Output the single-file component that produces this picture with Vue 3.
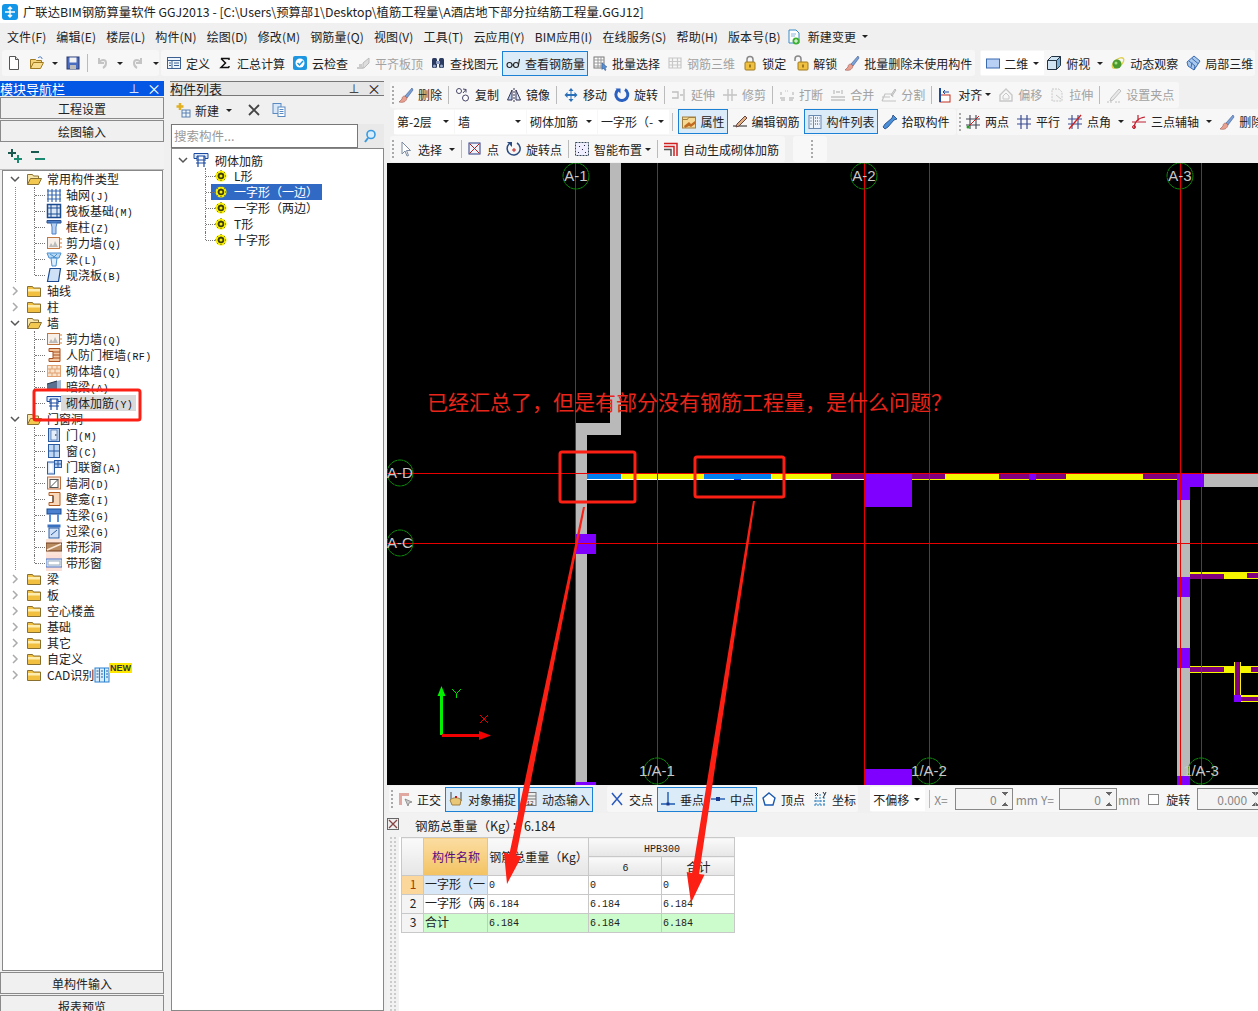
<template>
  <div class="app">
    <div class="titlebar">
      <svg class="logo" viewBox="0 0 16 16"><rect width="16" height="16" rx="3" fill="#1496e8" /><path d="M8 3v10M3 8h10M6 5l2-2 2 2M6 11l2 2 2-2" fill="none" stroke="#fff" stroke-width="1.4" /></svg>
      <span>广联达BIM钢筋算量软件 GGJ2013 - [C:\Users\预算部1\Desktop\植筋工程量\A酒店地下部分拉结筋工程量.GGJ12]</span>
    </div>

    <div class="menubar">
      <span v-for="m in menus" :key="m">{{ m }}</span>
      <span class="menu-new"><svg class="ti" viewBox="0 0 16 16" v-html="ic.newchange"></svg>新建变更<i class="caret"></i></span>
    </div>

    <div class="topbar">
      <div v-for="(g, n) in topGroups" :key="n" class="tgroup" :class="g.cls">
        <Tool v-for="(it, k) in g.items" :key="k" :it="it" />
      </div>
    </div>

    <div class="body">
      <aside class="nav">
        <div class="panel-head active"><span>模块导航栏</span><span class="pin">⊥</span><span class="close">×</span></div>
        <button class="navbtn">工程设置</button>
        <button class="navbtn">绘图输入</button>
        <div class="expand-tools">
          <svg viewBox="0 0 16 16" width="20" height="16" v-html="ic.plusplus"></svg>
          <svg viewBox="0 0 16 16" width="20" height="16" v-html="ic.minusminus"></svg>
        </div>
        <div class="tree nav-tree">
          <div v-for="(r, n) in navRows" :key="n" class="row" :class="{ child: r.child, last: r.last, guide: r.guide }">
            <template v-if="!r.child">
              <svg class="chev" viewBox="0 0 10 10"><path :d="r.open ? 'M1 3l4 4 4-4' : 'M3 1l4 4-4 4'" fill="none" :stroke="r.open ? '#555' : '#aaa'" stroke-width="1.5" /></svg>
              <svg class="ti folder" viewBox="0 0 16 16" v-html="r.open ? ic.folderOpen : ic.folder"></svg>
            </template>
            <svg v-else class="ti kid" viewBox="0 0 16 16" v-html="ic[r.i]"></svg>
            <span class="lbl" :class="{ picked: r.picked }">{{ r.t }}<em v-if="r.c">{{ r.c }}</em></span>
            <svg v-if="r.cad" class="ti cad" viewBox="0 0 16 16" v-html="ic.cad"></svg>
            <b v-if="r.cad" class="newtag">NEW</b>
          </div>
        </div>
        <button class="navbtn">单构件输入</button>
        <button class="navbtn">报表预览</button>
      </aside>

      <aside class="list">
        <div class="panel-head"><span>构件列表</span><span class="pin">⊥</span><span class="close">×</span></div>
        <div class="list-tools">
          <svg class="ti" viewBox="0 0 16 16" v-html="ic.newitem"></svg>
          <span>新建</span><i class="caret"></i>
          <svg class="ti xbtn" viewBox="0 0 16 16"><path d="M3 3l10 10M13 3L3 13" stroke="#444" stroke-width="1.8" /></svg>
          <svg class="ti" viewBox="0 0 16 16" v-html="ic.copydoc"></svg>
        </div>
        <div class="search">
          <div class="search-input">搜索构件...</div>
          <svg class="ti" viewBox="0 0 16 16"><circle cx="9" cy="6.500" r="4" fill="#d8eefc" stroke="#3a9ae0" stroke-width="1.600" /><path d="M6 10l-3 4" stroke="#3a9ae0" stroke-width="2" /></svg>
        </div>
        <div class="tree list-tree">
          <div class="row root">
            <svg class="chev" viewBox="0 0 10 10"><path d="M1 3l4 4 4-4" fill="none" stroke="#555" stroke-width="1.500" /></svg>
            <svg class="ti" viewBox="0 0 16 16" v-html="ic.masonry"></svg>
            <span>砌体加筋</span>
          </div>
          <div v-for="(t, n) in listRows" :key="t" class="row leaf" :class="{ last: n === listRows.length - 1 }">
            <svg class="gear" viewBox="0 0 12 12" v-html="ic.gear"></svg>
            <span class="leaf-text" :class="{ sel: n === 1 }">{{ t }}</span>
          </div>
        </div>
      </aside>

      <main class="work">
        <div v-for="(r, n) in workRows" :key="n" class="wrow">
          <div v-for="(g, m) in r" :key="m" class="tgroup" :class="g.cls">
            <Tool v-for="(it, k) in g.items" :key="k" :it="it" />
          </div>
        </div>

        <svg class="cad-view" viewBox="387 163 871 622" width="871" height="622">
          <rect v-for="(b, n) in blocks" :key="n" :x="b[0]" :y="b[1]" :width="b[2]" :height="b[3]" :fill="b[4]" />
          <path v-for="x in vLines" :key="x" :d="`M${x}.5 163V785`" stroke="#e80000" />
          <path v-for="y in hLines" :key="y" :d="`M387 ${y}.5H1258`" stroke="#e80000" />
          <g v-for="a in axes" :key="a.t">
            <circle :cx="a.x" :cy="a.y" r="13" fill="none" stroke="#0a8a0a" stroke-dasharray="6 0.5" />
            <text :x="a.x" :y="a.y + 5" class="axis">{{ a.t }}</text>
          </g>
          <path d="M441.500 735V695" stroke="#00f000" stroke-width="3" />
          <path d="M441.500 686l-4 10h8z" fill="#00f000" />
          <path d="M442 735.500H480" stroke="#f00000" stroke-width="3" />
          <path d="M491 735.500l-12-4.500v9z" fill="#f00000" />
          <path d="M452 689l4.500 4.500 4.500-4.500M456.500 693.500v4.500" fill="none" stroke="#00e000" />
          <path d="M480 715l8 8M488 715l-8 8" stroke="#e00000" />
        </svg>

        <div class="wrow status">
          <div v-for="(g, m) in statusGroups" :key="m" class="tgroup" :class="g.cls">
            <Tool v-for="(it, k) in g.items" :key="k" :it="it" />
          </div>
        </div>

        <div class="summary">
          <svg class="sum-x" viewBox="0 0 12 12"><rect x=".5" y=".5" width="11" height="11" fill="#eee" stroke="#666" /><path d="M2 2l8 8M10 2l-8 8" stroke="#844" stroke-width="1.300" /></svg>
          <span>钢筋总重量（Kg）：6.184</span>
        </div>

        <div class="sheet">
          <div class="sheet-grip"></div>
          <table class="grid">
            <colgroup><col class="c0" /><col class="c1" /><col class="c2" /><col class="c3" /><col class="c4" /></colgroup>
            <thead>
              <tr>
                <th rowspan="2"></th>
                <th rowspan="2" class="hname">构件名称</th>
                <th rowspan="2">钢筋总重量（Kg）</th>
                <th colspan="2"><em>HPB300</em></th>
              </tr>
              <tr><th><em>6</em></th><th>合计</th></tr>
            </thead>
            <tbody>
              <tr v-for="(r, n) in sheetRows" :key="n" :class="{ total: n === 2, cur: n === 0 }">
                <td class="num">{{ n + 1 }}</td>
                <td class="name">{{ r[0] }}</td>
                <td v-for="(v, k) in r.slice(1)" :key="k"><em>{{ v }}</em></td>
              </tr>
            </tbody>
          </table>
        </div>
      </main>
    </div>

    <!-- 截图上的红色批注 -->
    <svg class="notes" viewBox="0 0 1258 1011" width="1258" height="1011">
      <rect x="34" y="390" width="106" height="30" rx="2" class="mark" />
      <rect x="560" y="452" width="75" height="50" rx="2" class="mark" />
      <rect x="695" y="457" width="89" height="40" rx="2" class="mark" />
      <polygon points="585,507 516.200,855.300 521.600,856.400 507,884 504,852.800 509.400,853.900 583,507" fill="#fb1f14" />
      <polygon points="755,501 699.100,873.900 704.500,874.800 691,903 686.700,872 692.100,872.900 753,501" fill="#fb1f14" />
    </svg>
    <div class="note-text">已经汇总了，但是有部分没有钢筋工程量，是什么问题？</div>
  </div>
</template>

<script setup>
import { h } from 'vue'

const ic = {
  newchange: '<path d="M3 1h7l3 3v10H3z" fill="#fff" stroke="#3a8ac8"/><path d="M5 5h5M5 7h4" stroke="#8ab8e0"/><circle cx="10" cy="12" r="3.500" fill="#3cb030"/><path d="M10 10v4M8 12h4" stroke="#fff"/>',
  doc: '<path d="M3.500 1.500h6l3 3v10h-9z" fill="#fff" stroke="#555"/><path d="M9.500 1.500v3h3" fill="#ddd" stroke="#555"/>',
  open: '<path d="M1.500 13.500v-9h5l1 1h5v2" fill="#f4d27a" stroke="#a07a20"/><path d="M1.500 13.500l3-6h10l-3 6z" fill="#f8dc90" stroke="#a07a20"/><path d="M9 3c2-2 4-1 4 1" fill="none" stroke="#3a70c0"/>',
  save: '<rect x="2" y="2" width="12" height="12" fill="#4a6cc0" stroke="#2a3a70"/><rect x="4.500" y="2.500" width="7" height="5" fill="#f4f4f4"/><rect x="5" y="10" width="6" height="4" fill="#bbb"/>',
  undo: '<path d="M5 3v5h5M5 8c2-4 7-4 7 0 0 2-1 4-3 5" fill="none" stroke="#c4c4c4" stroke-width="2"/>',
  redo: '<path d="M11 3v5H6M11 8C9 4 4 4 4 8c0 2 1 4 3 5" fill="none" stroke="#c4c4c4" stroke-width="2"/>',
  define: '<rect x="1.500" y="2.500" width="13" height="11" fill="#eef4fb" stroke="#3a5f90"/><path d="M1.500 5.500h13M6 5.500v8M8 8h5M8 10.500h5M3 8h2M3 10.500h2" stroke="#3a5f90"/>',
  sigma: '<path d="M4 3.500h8v1.500M12 12.500H4l4.500-4.500L4 3.500M12 11v1.500" fill="none" stroke="#111" stroke-width="1.500"/>',
  cloud: '<rect x="1" y="1" width="14" height="14" rx="2" fill="#1e96e0"/><circle cx="8" cy="8" r="4.500" fill="#fff"/><path d="M5.500 8l2 2 3.500-4" fill="none" stroke="#1e96e0" stroke-width="1.500"/>',
  flat: '<path d="M2 13h6V8l6-5v5l-5 5H2z" fill="#ddd" stroke="#bbb"/><path d="M4 9h3v4H4z" fill="#ccc"/>',
  find: '<rect x="2" y="3" width="5" height="10" rx="1.500" fill="#2a3a60"/><rect x="9" y="3" width="5" height="10" rx="1.500" fill="#2a3a60"/><rect x="6" y="6" width="4" height="3" fill="#8a9ac0"/><circle cx="4.500" cy="11" r="1.500" fill="#9ac"/><circle cx="11.500" cy="11" r="1.500" fill="#9ac"/>',
  glasses: '<circle cx="4.500" cy="10" r="2.500" fill="none" stroke="#222" stroke-width="1.100"/><circle cx="11" cy="10" r="2.500" fill="none" stroke="#222" stroke-width="1.100"/><path d="M7 10h1.500M13.500 10l1-6" stroke="#222" stroke-width="1.100"/>',
  batch: '<rect x="2" y="2" width="10" height="11" fill="#fff" stroke="#777"/><path d="M2 5h10M2 8h10M2 11h10M6 2v11M9 2v11" stroke="#999"/><path d="M10 8l5 4-2 .5 1 2.500-1 .5-1.500-2.500-1.500 1.500z" fill="#5a90d0" stroke="#2a5090" stroke-width=".500"/>',
  rebar: '<path d="M2 3h12v10H2zM2 6.500h12M2 10h12M5.500 3v10M10.500 3v10" fill="none" stroke="#c8c8c8" stroke-width="1.200"/>',
  lock: '<path d="M5 7V4.500a3 3 0 0 1 6 0V7" fill="none" stroke="#888" stroke-width="1.500"/><rect x="3" y="7" width="10" height="8" rx="1" fill="#f0c040" stroke="#a07a20"/><rect x="7.300" y="9.500" width="1.400" height="3" fill="#7a5a10"/>',
  unlock: '<path d="M2 6V4a3 3 0 0 1 6 0v3" fill="none" stroke="#888" stroke-width="1.500"/><rect x="5" y="7" width="10" height="8" rx="1" fill="#f0c040" stroke="#a07a20"/><rect x="9.300" y="9.500" width="1.400" height="3" fill="#7a5a10"/>',
  brush: '<path d="M14 1l-7 8 2 2 6-8z" fill="#7aa0d8" stroke="#3a5a90" stroke-width=".600"/><path d="M7 9c-2 0-3 1-3 3l-3 3c4 1 7 0 8-4z" fill="#e8a090" stroke="#a05a50" stroke-width=".600"/>',
  plane: '<rect x="1.500" y="4" width="13" height="9" fill="#b8d0f4" stroke="#3a6ab0"/>',
  cube: '<path d="M1.500 5.500l4-4h9l-4 4v9h-9z" fill="#d0e4f4" stroke="#234"/><path d="M10.500 5.500v9l4-4v-9zM1.500 5.500h9" fill="#7ab0d8" stroke="#234"/>',
  orbit: '<ellipse cx="8" cy="8" rx="7" ry="3.500" transform="rotate(-40 8 8)" fill="none" stroke="#e0d050" stroke-width="1.400"/><circle cx="7" cy="9" r="4.500" fill="#4a9a30"/><circle cx="6" cy="8" r="1.500" fill="#a8e080"/>',
  local3d: '<path d="M2 7l7-6 6 5-6 9-6-4z" fill="#a8c8ec" stroke="#3a6ab0"/><path d="M4 6l6 5M7 3.500l6 5M9 15l1-4M6 12.500l1-5" stroke="#3a6ab0"/>',
  dup: '<circle cx="4" cy="4" r="2.500" fill="#fff" stroke="#446"/><circle cx="10.500" cy="11" r="3" fill="#fff" stroke="#446"/><path d="M8 2l3 .5v3M11 2.500L8 6" fill="none" stroke="#446"/>',
  mirror: '<path d="M8 1v14" stroke="#335" stroke-dasharray="2 1"/><path d="M6 3v10H1.500z" fill="#b8d0f0" stroke="#335"/><path d="M10 3v10h4.500z" fill="#dde8f8" stroke="#335"/>',
  move: '<path d="M8 1l2.500 3h-2v3h3V5l3 3-3 3V9h-3v3h2L8 15l-2.500-3h2V9h-3v2l-3-3 3-3v2h3V4h-2z" fill="#2a70b8"/>',
  rotate: '<path d="M4 3a6 6 0 1 0 7-.5" fill="none" stroke="#2a60c0" stroke-width="3"/><path d="M1.500 1.500h5v5z" fill="#2a60c0"/>',
  extend: '<path d="M1 5h6v6H1M9 8h3M13 2v12" fill="none" stroke="#c0c0c0" stroke-width="1.400"/>',
  trim: '<path d="M1 8h14M6 2v12M10 2v12" stroke="#c4c4c4" stroke-width="1.400"/>',
  breaks: '<path d="M2 8V5M14 8V5M1 11h5M10 11h5M2 13h4M10 13h4" stroke="#c4c4c4" stroke-width="1.400"/><path d="M6 4h4" stroke="#c4c4c4" stroke-dasharray="1 1"/>',
  merge: '<path d="M4 3v4M12 3v4M1 10h14M1 13h14M6 5h4" stroke="#c4c4c4" stroke-width="1.400"/>',
  split: '<path d="M1 14h14M1 10h8M1 14l3-7h7l1 3" fill="none" stroke="#c4c4c4" stroke-width="1.200"/><path d="M10 8l4-6 1 1-4 6z" fill="#ddd" stroke="#bbb"/>',
  align: '<rect x="2" y="8" width="10" height="7" fill="#fff" stroke="#c03020"/><path d="M2 1v14" stroke="#1a4aa0" stroke-width="2"/><path d="M11 5H5M7 3L5 5l2 2" fill="none" stroke="#1a4aa0"/>',
  offset: '<path d="M8 2l6 6v6H2V8z" fill="none" stroke="#c8c8c8" stroke-width="1.400"/><path d="M8 6l3 3v3H5V9z" fill="none" stroke="#c8c8c8"/>',
  stretch: '<path d="M3 2h7l3 3v9H3z" fill="#f4f4f4" stroke="#c8c8c8" stroke-dasharray="2 1"/><path d="M7 8l5 4" stroke="#c8c8c8"/>',
  grippt: '<path d="M13 2l-8 9-1 3 3-1 8-9z" fill="#e8e8e8" stroke="#c0c0c0"/><path d="M1 15h5M9 15h5" stroke="#c0c0c0" stroke-dasharray="2 1"/>',
  attr: '<rect x="1.500" y="3" width="13" height="11" fill="#f4d894" stroke="#a08040"/><path d="M1.500 5.500h5l1-2h7" fill="none" stroke="#a08040"/><path d="M3 12l5-4 2 2 4-3v3l-4 3-2-1-4 2z" fill="#c06a20"/>',
  edit: '<path d="M1 12h14" stroke="#222"/><path d="M5 10l8-8 2 2-8 8-3 1z" fill="#e0b080" stroke="#644"/>',
  list: '<rect x="2" y="1.500" width="12" height="13" fill="#eef4fb" stroke="#6a8ab0"/><path d="M6.500 1.500v13" stroke="#6a8ab0"/><path d="M3.500 4h1.500M3.500 7h1.500M3.500 10h1.500M8 4h4.500M8 7h4.500M8 10h4.500" stroke="#345" stroke-dasharray="1 1"/>',
  pick: '<path d="M11 1l4 4-3 1-6 7-3 2-2-2 2-3 7-6z" fill="#4a90d8" stroke="#1a4080" stroke-width=".800"/>',
  twopt: '<path d="M1 5h14M1 11h14M5 1v14M11 1v14" stroke="#445" stroke-width="1.100"/><path d="M2 14L14 2" stroke="#c02020"/><circle cx="3" cy="13" r="1.500" fill="#2a9a2a"/>',
  parallel: '<path d="M1 5h14M1 10h14M5 1v14M11 1v14" stroke="#3a4a90" stroke-width="1.200"/>',
  angle: '<path d="M1 5h14M1 10h14M5 1v14M11 1v14" stroke="#3a4a90" stroke-width="1.100"/><path d="M2 15L14 1" stroke="#d02020" stroke-width="1.300"/>',
  arc: '<path d="M3 15C3 8 7 4 14 3M1 8h14M7 1v6" fill="none" stroke="#c02030" stroke-width="1.200"/><circle cx="3" cy="13" r="1.500" fill="none" stroke="#c02030"/>',
  pointer: '<path d="M4 1v12l3-3 2 5 1.500-.5-2-5h4z" fill="#fff" stroke="#7a8aa0"/>',
  pointx: '<rect x="2" y="2" width="11" height="11" fill="#eef2fa" stroke="#2a3a80"/><path d="M3 3l9 9M12 3l-9 9" stroke="#b02020"/>',
  rotpt: '<path d="M3 3a6.500 6.500 0 1 0 8-1" fill="none" stroke="#2a4a80" stroke-width="1.500"/><path d="M1 1h5v5z" fill="#2a4a80"/><path d="M8 7v4M6 9h4" stroke="#c02020"/>',
  smart: '<rect x="1.500" y="1.500" width="13" height="13" fill="#eef" stroke="#345" stroke-dasharray="2 1"/><path d="M5 5h1v1H5zM10 4h1v1h-1zM8 8h1v1H8zM4 11h1v1H4zM11 11h1v1h-1z" fill="#224"/>',
  auto: '<path d="M1 2.500h13V15M1 5.500h10V15" fill="none" stroke="#d02020" stroke-width="1.500"/><path d="M1 8.500h7V15" fill="none" stroke="#555" stroke-width="1.500"/>',
  ortho: '<path d="M2 2h10v3H5v9H2z" fill="#e0a8a0"/><path d="M8 8l3 7 1-3 3-1z" fill="#ccc" stroke="#666" stroke-width=".600"/>',
  snap: '<path d="M3 1v9M13 1v9" stroke="#444"/><path d="M2 9c3-3 9-3 11 0l-1 5H4z" fill="#e8c878" stroke="#a08040"/><rect x="7" y="5" width="2" height="2" fill="#c02020"/>',
  dyn: '<rect x="2" y="1.500" width="12" height="13" fill="#eee" stroke="#777"/><path d="M2 5h12M2 8h12" stroke="#777"/><text x="4.500" y="13.800" font-size="6" fill="#222" font-family="Liberation Mono">12</text>',
  cross: '<path d="M3 2c3 4 7 8 10 12M13 2C10 6 6 10 3 14" fill="none" stroke="#2a5ac0" stroke-width="1.500"/>',
  perp: '<path d="M8 1v12M1 13h14" stroke="#1a5ab0" stroke-width="1.400"/><rect x="6.500" y="11.500" width="3" height="3" fill="#1a3a90"/>',
  mid: '<path d="M1 8h14" stroke="#1a5ab0" stroke-width="1.400"/><rect x="6" y="6" width="4" height="4" fill="#1a3a90"/>',
  vertex: '<path d="M8 2l6 5-2 7H4L2 7z" fill="#fff" stroke="#1a5ab0" stroke-width="1.400"/>',
  coord: '<path d="M2 14h12M8 3v11M2 10h12M4 6v8M12 6v8" stroke="#2a80c0" stroke-dasharray="2 1"/><path d="M3 2l3 3M6 2L3 5M11 1l2 3M14 1l-3 6" stroke="#234"/>',
  plusplus: '<path d="M5 1v8M1 5h8" stroke="#1a5a50" stroke-width="2"/><path d="M11 7v8M7 11h8" stroke="#1a8a70" stroke-width="2"/>',
  minusminus: '<path d="M1 4h8" stroke="#1a5a50" stroke-width="2"/><path d="M5 11h10" stroke="#1a8a70" stroke-width="2"/>',
  folder: '<path d="M1.500 13.500v-10h5l1 1.500h7v8.500z" fill="#f2c040" stroke="#8a7030"/><path d="M2 6h12v2.500H2z" fill="#fdeeb0"/>',
  folderOpen: '<path d="M1.500 13.500v-10h5l1 1.500h5v2" fill="#f8e6a8" stroke="#8a7030"/><path d="M1.500 13.500l3-6h11l-3 6z" fill="#f2c850" stroke="#8a7030"/>',
  newitem: '<path d="M5 1v7M1.500 4.500h7" stroke="#e0b020" stroke-width="2.500"/><rect x="7" y="8" width="8" height="7" fill="#eef4fb" stroke="#5a80b0"/><path d="M7 11h8M11 8v7" stroke="#5a80b0"/>',
  copydoc: '<rect x="2" y="1.500" width="8" height="10" fill="#d8e8f8" stroke="#5a8ac0"/><rect x="7" y="5" width="7" height="9.500" fill="#fff" stroke="#5a8ac0"/><path d="M8.500 7.500h4M8.500 9.500h4M8.500 11.500h4" stroke="#5a8ac0"/>',
  grid: '<path d="M2 2v13M6 2v13M10 2v13M14 2v13M1 4h14M1 8h14M1 12h14" stroke="#3a6ab0" stroke-width="1.200"/>',
  raft: '<rect x="1.500" y="1.500" width="13" height="13" fill="#dce8f6" stroke="#1a4a90" stroke-width="1.500"/><path d="M1 5h14M1 11h14M5 1v14M11 1v14" stroke="#1a4a90"/>',
  col: '<path d="M1 1.500h14v2.500H1z" fill="#4a80c8" stroke="#2a5090"/><path d="M5 4h6l-1 4v7H6V8z" fill="#b8d0f0" stroke="#4a80c8"/>',
  shear: '<rect x="1.500" y="2.500" width="12" height="11" fill="#f8f0e8" stroke="#c07840"/><path d="M3 12l2-4 2 3 2-5 3 6z" fill="#bbb"/><path d="M14 4h2M14 8h2M14 12h2" stroke="#e08030"/>',
  beam: '<path d="M1 2h14l-2 5H3z" fill="#b8d8f4" stroke="#4a90d0"/><path d="M5 7h6l-1 8H6z" fill="#dceefc" stroke="#4a90d0"/><path d="M4 3l6 4M11 3L7 7" stroke="#4a90d0"/>',
  slab: '<path d="M4 1.500h10.500l-2 13H1.500z" fill="#cde0f6" stroke="#1a4a90" stroke-width="1.200"/>',
  rfwall: '<path d="M3 1.500h11v13H3v-3h4v-7H3z" fill="#f4c8a0" stroke="#a85020"/><path d="M7 5h7M7 8h7M7 11h7" stroke="#a85020"/>',
  brick: '<rect x="1.500" y="2.500" width="13" height="11" fill="#fbe4cc" stroke="#e0a070"/><path d="M1.500 6h13M1.500 10h13M6 2.500V6M11 2.500V6M4 6v4M9 6v4M6 10v3.500M11 10v3.500" stroke="#e0a070"/>',
  darkbeam: '<path d="M1 5l10-3v10H1z" fill="#5a7090"/><path d="M11 2l4-1v9l-4 2z" fill="#a0b8d0"/><path d="M1 5l10-3" stroke="#234"/>',
  masonry: '<path d="M1 1.500h14v5H12v-2.500H4v2.500H1z" fill="#dce8f8" stroke="#1a4aa0"/><path d="M5 4v11M11 4v11M3 8h10M3 11h10" stroke="#1a4aa0" stroke-width="1.200"/>',
  door: '<rect x="2.500" y="1.500" width="11" height="13" fill="#b8d0f0" stroke="#2a5aa0"/><rect x="5" y="3" width="6" height="10" fill="#e4eefa" stroke="#2a5aa0" stroke-width=".600"/><circle cx="9.800" cy="8" r=".800" fill="#234"/>',
  win: '<rect x="2.500" y="1.500" width="11" height="13" fill="#c0d8f4" stroke="#2a5aa0"/><path d="M8 1.500v13M2.500 8h11" stroke="#2a5aa0"/>',
  doorwin: '<rect x="1.500" y="3" width="7" height="12" fill="#d8e6f8" stroke="#2a5aa0"/><rect x="8.500" y="1.500" width="7" height="7" fill="#b0ccf0" stroke="#2a5aa0"/><path d="M12 1.500v7M8.500 5h7" stroke="#2a5aa0"/><rect x="3.500" y="5" width="3" height="8" fill="#fff"/>',
  hole: '<rect x="1.500" y="2" width="13" height="12" fill="#fbe8d8" stroke="#c07040"/><rect x="4" y="4.500" width="8" height="8" fill="#fff" stroke="#555"/><path d="M4 12.500l8-8" stroke="#555"/>',
  niche: '<path d="M3 1.500h11v13H3v-3h4v-7H3z" fill="#f8d8b8" stroke="#b05a20"/><path d="M7 4.500v7" stroke="#333"/>',
  link: '<rect x="1" y="2" width="14" height="5" fill="#4a80d0" stroke="#1a4a90"/><path d="M4 7v8M12 7v8" stroke="#5a90d8" stroke-width="2"/>',
  lintel: '<rect x="1.500" y="1.500" width="13" height="3" fill="#3a70c0"/><rect x="3" y="5" width="10" height="10" fill="#d0e0f6" stroke="#2a5aa0"/><path d="M5 12l6-5" stroke="#2a5aa0"/>',
  band: '<rect x="0" y="0" width="16" height="16" fill="#fce4d8"/><rect x="0" y="4" width="16" height="8" fill="#b88a60" stroke="#704020"/><path d="M1 11L15 5" stroke="#fbeada" stroke-width="1.500"/>',
  bandwin: '<rect x="0" y="0" width="16" height="16" fill="#fce0d8"/><rect x="0" y="4" width="16" height="8" fill="#e4eefa" stroke="#4a70c0"/><rect x="2" y="6" width="12" height="4" fill="#fff" stroke="#9ab"/>',
  cad: '<rect x="1" y="1" width="14" height="14" fill="#d8ecfa" stroke="#2a80d0"/><path d="M5.500 1v14M10.500 1v14" stroke="#2a80d0"/><path d="M2.500 4h2M2.500 7h2M2.500 10h2M7 4h2M7 7h2M7 10h2M12 4h2M12 7h2M12 10h2" stroke="#2a60a0"/>',
  gear: '<circle cx="6" cy="6" r="5.500" fill="#f8f000"/><path d="M6 0v12M0 6h12M2 2l8 8M10 2l-8 8" stroke="#5a5a00" stroke-dasharray="1 1.500"/><circle cx="6" cy="6" r="3.200" fill="#3a3a10"/><circle cx="6" cy="6" r="1.500" fill="#f8f000"/>',
}

const Tool = ({ it }) => {
  if (it.sep) return h('i', { class: 'tool-sep' })
  if (it.grip) return h('i', { class: 'tool-grip' })
  if (it.sel) {
    return h('div', { class: 'tool-sel', style: { width: it.w + 'px' } }, [
      h('span', { class: 'sel-text' }, [it.i ? h('svg', { class: 'tool-ic', viewBox: '0 0 16 16', innerHTML: ic[it.i] }) : null, it.sel]),
      h('i', { class: 'caret' }),
    ])
  }
  if (it.input) {
    return h('div', { class: 'tool-input', style: { width: it.w + 'px' } }, [h('span', it.input), h('i', { class: 'spin' })])
  }
  if (it.check) return h('i', { class: 'tool-check' })
  if (it.plain) return h('span', { class: 'tool-plain' }, it.plain)
  return h('div', { class: ['tool', { off: it.off, on: it.on, join: it.join }] }, [
    it.i ? h('svg', { class: 'tool-ic', viewBox: '0 0 16 16', innerHTML: ic[it.i] }) : null,
    it.t ? h('span', it.t) : null,
    it.dd ? h('i', { class: ['caret', { tight: it.dd === 'tight' }] }) : null,
  ])
}
Tool.props = ['it']

const menus = ['文件(F)', '编辑(E)', '楼层(L)', '构件(N)', '绘图(D)', '修改(M)', '钢筋量(Q)', '视图(V)', '工具(T)', '云应用(Y)', 'BIM应用(I)', '在线服务(S)', '帮助(H)', '版本号(B)']

const topGroups = [
  { cls: 'g-file', items: [{ i: 'doc' }, { i: 'open', dd: true }, { i: 'save' }, { sep: true }, { i: 'undo', dd: true, off: true }, { i: 'redo', dd: true, off: true }] },
  { cls: 'g-main', items: [
    { i: 'define', t: '定义' }, { i: 'sigma', t: '汇总计算' }, { i: 'cloud', t: '云检查' }, { i: 'flat', t: '平齐板顶', off: true },
    { i: 'find', t: '查找图元' }, { i: 'glasses', t: '查看钢筋量', on: true }, { i: 'batch', t: '批量选择' }, { i: 'rebar', t: '钢筋三维', off: true },
    { i: 'lock', t: '锁定' }, { i: 'unlock', t: '解锁' }, { i: 'brush', t: '批量删除未使用构件' },
  ] },
  { cls: 'g-view', items: [{ sel: '二维', w: 63, i: 'plane' }, { i: 'cube', t: '俯视', dd: true }, { i: 'orbit', t: '动态观察' }, { i: 'local3d', t: '局部三维' }] },
]

const workRows = [
  [{ cls: 'g-a', items: [
    { grip: true }, { i: 'brush', t: '删除' }, { sep: true }, { i: 'dup', t: '复制' }, { i: 'mirror', t: '镜像' }, { sep: true }, { i: 'move', t: '移动' }, { i: 'rotate', t: '旋转' }, { sep: true },
    { i: 'extend', t: '延伸', off: true }, { i: 'trim', t: '修剪', off: true }, { sep: true }, { i: 'breaks', t: '打断', off: true }, { i: 'merge', t: '合并', off: true }, { i: 'split', t: '分割', off: true }, { sep: true },
    { i: 'align', t: '对齐', dd: 'tight' }, { i: 'offset', t: '偏移', off: true }, { i: 'stretch', t: '拉伸', off: true }, { sep: true }, { i: 'grippt', t: '设置夹点', off: true },
  ] }],
  [
    { cls: 'g-b', items: [
      { sel: '第-2层', w: 60 }, { sel: '墙', w: 71 }, { sel: '砌体加筋', w: 70 }, { sel: '一字形（-', w: 71 }, { sep: true },
      { i: 'attr', t: '属性', on: true }, { i: 'edit', t: '编辑钢筋' }, { i: 'list', t: '构件列表', on: true }, { i: 'pick', t: '拾取构件' },
    ] },
    { cls: 'g-c', items: [
      { grip: true }, { i: 'twopt', t: '两点' }, { i: 'parallel', t: '平行' }, { i: 'angle', t: '点角', dd: true }, { i: 'arc', t: '三点辅轴', dd: true }, { i: 'brush', t: '删除辅轴' },
    ] },
  ],
  [
    { cls: 'g-d', items: [
      { grip: true }, { i: 'pointer', t: '选择', dd: true }, { sep: true }, { i: 'pointx', t: '点' }, { i: 'rotpt', t: '旋转点' }, { sep: true }, { i: 'smart', t: '智能布置', dd: 'tight' }, { sep: true }, { i: 'auto', t: '自动生成砌体加筋' },
    ] },
    { cls: 'g-e', items: [{ grip: true }] },
  ],
]

const statusGroups = [
  { cls: 'g-s1', items: [{ grip: true }, { i: 'ortho', t: '正交' }, { i: 'snap', t: '对象捕捉', on: true }, { i: 'dyn', t: '动态输入', on: true, join: true }] },
  { cls: 'g-s2', items: [{ i: 'cross', t: '交点' }, { i: 'perp', t: '垂点', on: true }, { i: 'mid', t: '中点', on: true, join: true }, { i: 'vertex', t: '顶点' }, { i: 'coord', t: '坐标' }] },
  { cls: 'g-s3', items: [
    { sel: '不偏移', w: 55 }, { sep: true }, { plain: 'X=' }, { input: '0', w: 58 }, { plain: 'mm' }, { plain: 'Y=' }, { input: '0', w: 58 }, { plain: 'mm' }, { check: true }, { i: '', t: '旋转' }, { input: '0.000', w: 66 },
  ] },
]

const tree = [
  { t: '常用构件类型', kids: [['grid', '轴网', '(J)'], ['raft', '筏板基础', '(M)'], ['col', '框柱', '(Z)'], ['shear', '剪力墙', '(Q)'], ['beam', '梁', '(L)'], ['slab', '现浇板', '(B)']] },
  { t: '轴线' },
  { t: '柱' },
  { t: '墙', kids: [['shear', '剪力墙', '(Q)'], ['rfwall', '人防门框墙', '(RF)'], ['brick', '砌体墙', '(Q)'], ['darkbeam', '暗梁', '(A)'], ['masonry', '砌体加筋', '(Y)', true]] },
  { t: '门窗洞', kids: [['door', '门', '(M)'], ['win', '窗', '(C)'], ['doorwin', '门联窗', '(A)'], ['hole', '墙洞', '(D)'], ['niche', '壁龛', '(I)'], ['link', '连梁', '(G)'], ['lintel', '过梁', '(G)'], ['band', '带形洞'], ['bandwin', '带形窗']] },
  { t: '梁' }, { t: '板' }, { t: '空心楼盖' }, { t: '基础' }, { t: '其它' }, { t: '自定义' },
  { t: 'CAD识别', cad: true },
]

const navRows = tree.flatMap((n) => {
  const head = { t: n.t, open: !!n.kids, cad: n.cad }
  const kids = (n.kids || []).map((k, i) => ({ child: true, i: k[0], t: k[1], c: k[2], picked: k[3], last: i === n.kids.length - 1, guide: true }))
  return [head, ...kids]
})

const listRows = ['L形', '一字形（一边）', '一字形（两边）', 'T形', '十字形']

const sheetRows = [
  ['一字形（一', '0', '0', '0'],
  ['一字形（两', '6.184', '6.184', '6.184'],
  ['合计', '6.184', '6.184', '6.184'],
]

const GREY = '#b9b9b9'
const YEL = '#f5f500'
const BLUE = '#0080f0'
const PUR = '#800080'
const VIO = '#8000ff'

const blocks = [
  [610, 163, 11, 272, GREY], [576, 423, 45, 12, GREY], [576, 423, 11, 362, GREY],
  [587, 473, 277, 6, YEL], [587, 479, 277, 1, '#fff'],
  [587, 473, 34, 6, BLUE], [704, 473, 67, 6, BLUE], [734, 479, 7, 1, '#1030f0'],
  [831, 474, 33, 5, PUR],
  [912, 473, 265, 6, YEL], [912, 479, 265, 1, '#f5f500'],
  [912, 474, 33, 5, PUR], [999, 474, 30, 5, PUR], [1036, 474, 30, 5, PUR], [1143, 474, 34, 5, PUR],
  [1029, 474, 7, 6, VIO], [865, 474, 47, 33, VIO], [865, 769, 47, 16, VIO],
  [576, 534, 20, 20, VIO], [576, 782, 20, 3, VIO],
  [1204, 474, 54, 13, GREY], [1177, 500, 13, 285, GREY],
  [1177, 474, 27, 13, VIO], [1177, 474, 13, 26, VIO], [1177, 577, 13, 20, VIO], [1177, 648, 13, 20, VIO], [1177, 776, 13, 9, VIO],
  [1190, 572, 68, 7, YEL], [1190, 574, 34, 5, PUR], [1247, 573, 11, 5, PUR],
  [1190, 666, 68, 7, YEL], [1190, 667, 34, 5, PUR], [1251, 667, 7, 5, PUR],
  [1234, 662, 7, 39, YEL], [1235, 662, 5, 36, PUR], [1241, 695, 17, 7, YEL], [1241, 697, 17, 4, PUR], [1234, 695, 7, 7, VIO],
]

const vLines = [575, 657, 864, 929, 1180, 1201]
const hLines = [473, 543]

const axes = [
  { t: 'A-1', x: 576, y: 176 }, { t: 'A-2', x: 864, y: 176 }, { t: 'A-3', x: 1180, y: 176 },
  { t: 'A-D', x: 400, y: 473 }, { t: 'A-C', x: 400, y: 543 },
  { t: '1/A-1', x: 657, y: 771 }, { t: '1/A-2', x: 929, y: 771 }, { t: '1/A-3', x: 1201, y: 771 },
]
</script>

<style>
html, body { margin: 0; overflow: hidden; }

.tool, .tool-sel, .tool-input, .tool-plain {
  font: 12px "Noto Sans CJK SC", "Liberation Sans", sans-serif;
  color: #222;
}
.tool {
  display: flex;
  align-items: center;
  gap: 4px;
  height: 23px;
  padding: 0 2px;
  border: 1px solid transparent;
  margin: 0 -1px;
  white-space: nowrap;
  flex: none;
}
.tool.off { color: #a2a2a2; }
.tool.on { background: #dcebf8; border-color: #1c80d4; }
.tool.join { margin-left: -2px; }
.tool-ic { width: 16px; height: 16px; flex: none; }
.tool-sep { width: 1px; height: 18px; background: #bbb; margin: 0 1px; flex: none; }
.tool-grip {
  width: 2px;
  height: 18px;
  margin: 0 -1px 0 2px;
  flex: none;
  background: repeating-linear-gradient(#aaa 0 2px, transparent 2px 4px);
}
.tool-sel {
  display: flex;
  align-items: center;
  justify-content: space-between;
  height: 24px;
  padding: 0 5px 0 3px;
  background: #fff;
  flex: none;
  box-sizing: border-box;
  white-space: nowrap;
  overflow: hidden;
}
.sel-text { display: flex; align-items: center; gap: 3px; }
.tool-input {
  display: flex;
  align-items: center;
  justify-content: flex-end;
  gap: 5px;
  height: 22px;
  margin-left: 2px;
  padding-right: 3px;
  box-sizing: border-box;
  border: 1px solid #888;
  color: #888;
  background: #f4f4f4;
  flex: none;
}
.spin {
  width: 7px;
  height: 14px;
  background:
    linear-gradient(45deg, transparent 50%, #666 50%) 0 0 / 3.500px 4px no-repeat,
    linear-gradient(-45deg, transparent 50%, #666 50%) 100% 0 / 3.500px 4px no-repeat,
    linear-gradient(135deg, transparent 50%, #666 50%) 0 100% / 3.500px 4px no-repeat,
    linear-gradient(-135deg, transparent 50%, #666 50%) 100% 100% / 3.500px 4px no-repeat;
}
.tool-plain { color: #888; flex: none; }
.tool-check { width: 9px; height: 9px; border: 1px solid #888; background: #fff; margin: 0 2px 0 5px; flex: none; }
.caret {
  display: inline-block;
  width: 0;
  height: 0;
  border: 3px solid transparent;
  border-top: 3px solid #222;
  border-bottom: 0;
  margin-left: 3px;
  flex: none;
}
.caret.tight { margin-left: -1px; }
.g-view .tool-sel { margin-right: -3px; padding-left: 4px; }
.g-b .tool { margin: 0 .5px; }
.g-b .tool-sep { margin: 0 4px 0 2px; }
.g-b .tool-sel { margin-right: 1px; }
.g-d .tool-sep { margin: 0 .5px; }
.g-s3 .tool-plain:nth-child(3) { margin-right: 2px; }
.g-s3 .tool-plain:nth-child(8) { margin-left: -2px; }
</style>

<style scoped>
.app {
  position: relative;
  width: 1258px;
  height: 1011px;
  overflow: hidden;
  background: #f0f0f0;
  color: #222;
  font: 12px "Noto Sans CJK SC", "Liberation Sans", sans-serif;
}

.titlebar {
  display: flex;
  align-items: center;
  gap: 5px;
  height: 23px;
  padding-left: 2px;
  background: #fff;
  font-size: 12.350px;
  white-space: nowrap;
}
.logo { width: 16px; height: 16px; flex: none; }

.menubar {
  display: flex;
  align-items: center;
  gap: 10px;
  height: 27px;
  padding-left: 7px;
  letter-spacing: .12px;
}
.menu-new { display: flex; align-items: center; gap: 6px; margin-left: -1px; margin-left: -5px; }
.menu-new .caret { margin-left: 0; }
.ti { width: 16px; height: 16px; flex: none; }

.topbar {
  display: flex;
  height: 30px;
  box-sizing: border-box;
}
.tgroup {
  display: flex;
  align-items: center;
  gap: 3px;
  height: 26px;
  background: #f7f7f7;
  border-radius: 3px;
  flex: none;
}
.g-file { width: 157px; padding-left: 2px; margin-left: 2px; box-sizing: border-box; }
.g-main { margin-left: 2px; padding: 0 1px 0 3px; }
.g-view { margin-left: 5px; padding-left: 1px; gap: 3px; }

.body { display: flex; height: 931px; }

.nav { width: 164px; display: flex; flex-direction: column; flex: none; margin-right: 6px; padding-top: 1px; box-sizing: border-box; }
.list { width: 214px; display: flex; flex-direction: column; flex: none; padding-top: 1px; box-sizing: border-box; }

.panel-head {
  display: flex;
  align-items: center;
  height: 15px;
  flex: none;
  background: #e6e6e6;
  border: 1px solid #777;
  border-width: 1px 0;
  font-size: 13px;
  line-height: 13px;
  box-sizing: border-box;
}
.panel-head span:first-child { flex: 1; }
.panel-head.active { background: #0457e4; color: #fff; border-color: #0457e4; }
.pin { width: 20px; text-align: center; font-size: 11px; }
.close { width: 20px; text-align: center; font-size: 14px; }

.navbtn {
  height: 22px;
  flex: none;
  margin: 1px 0 0;
  padding: 0;
  background: #f0f0f0;
  border: 1px solid #8a8a8a;
  font: inherit;
  color: #222;
}

.expand-tools {
  display: flex;
  gap: 3px;
  height: 28px;
  flex: none;
  align-items: center;
  padding-left: 5px;
  box-sizing: border-box;
  background: #f2f2f2;
  border-bottom: 1px solid #bbb;
}

.tree {
  background: #fff;
  border: 1px solid #888;
  min-height: 0;
  overflow: hidden;
}
.nav-tree { flex: none; height: 801px; margin: 0 0 0 2px; width: 161px; box-sizing: border-box; }

.row {
  position: relative;
  display: flex;
  align-items: center;
  height: 16px;
  white-space: nowrap;
}
.chev { position: absolute; left: 7px; top: 3px; width: 10px; height: 10px; }
.folder { position: absolute; left: 23px; top: 0; }
.kid { position: absolute; left: 43px; top: 0; }
.lbl { position: absolute; left: 44px; top: 0; line-height: 16px; padding: 0 2px 0 0; font-size: 12px; }
.child .lbl { left: 60px; padding: 0 3px; }
.lbl em { font: 10px "Liberation Mono", monospace; font-style: normal; letter-spacing: .4px; color: #111; }
.child .lbl.picked { left: 58px; width: 75px; padding: 0 0 0 5px; box-sizing: border-box; background: #d9d9d9; }
.child::before {
  content: "";
  position: absolute;
  left: 31px;
  top: 0;
  bottom: 0;
  border-left: 1px dotted #777;
}
.child.last::before { bottom: 8px; }
.child::after {
  content: "";
  position: absolute;
  left: 32px;
  width: 10px;
  top: 8px;
  border-top: 1px dotted #777;
}
.guide { background: linear-gradient(#888 50%, transparent 50%) 12px 0 / 1px 2px repeat-y; }
.cad { position: absolute; left: 91px; top: 0; }
.newtag {
  position: absolute;
  left: 106px;
  top: -4px;
  font: bold 9px/10px "Liberation Sans", sans-serif;
  background: #ffe800;
  color: #333;
  padding: 0 1px;
}

.list-tools {
  display: flex;
  align-items: center;
  gap: 4px;
  height: 28px;
  flex: none;
  padding-left: 5px;
  box-sizing: border-box;
}
.list-tools .xbtn { margin-left: 10px; margin-right: 5px; }
.search { display: flex; align-items: center; height: 24px; flex: none; background: #e9e9e9; }
.search-input {
  width: 187px;
  height: 24px;
  margin-left: 1px;
  padding-left: 2px;
  line-height: 22px;
  box-sizing: border-box;
  background: #fff;
  border: 1px solid #777;
  color: #999;
  font-size: 12.500px;
}
.search .ti { margin-left: 4px; }
.list-tree { margin-left: 1px; width: 213px; box-sizing: border-box; padding-top: 3px; flex: 1; }
.root { padding-left: 6px; gap: 6px; height: 16px; }
.root .chev { left: 6px; }
.root .ti { margin-left: 15px; }
.leaf::before {
  content: "";
  position: absolute;
  left: 33px;
  top: 0;
  bottom: 0;
  border-left: 1px dotted #777;
}
.leaf.last::before { bottom: 8px; }
.leaf::after {
  content: "";
  position: absolute;
  left: 34px;
  width: 9px;
  top: 8px;
  border-top: 1px dotted #777;
}
.gear { position: absolute; left: 43px; top: 2px; width: 12px; height: 12px; }
.leaf-text { position: absolute; left: 59px; top: 0; line-height: 16px; padding-left: 3px; }
.leaf-text.sel { left: 39px; width: 111px; padding-left: 23px; box-sizing: border-box; background: #316ac5; color: #fff; z-index: 0; }
.leaf:has(.sel) .gear { z-index: 1; }

.work { flex: 1; min-width: 0; margin-left: 3px; padding-top: 1px; box-sizing: border-box; display: flex; flex-direction: column; overflow: hidden; }
.wrow { display: flex; height: 27px; flex: none; align-items: center; white-space: nowrap; }
.wrow:nth-child(3) { height: 28px; }
.g-a { margin-left: 3px; padding-right: 3px; }
.g-b { margin-left: 7px; padding-right: 3px; column-gap: 0; }
.g-c { margin-left: 1px; }
.g-d { margin-left: 3px; padding-right: 4px; }
.g-e { margin-left: 8px; width: 34px; justify-content: center; background: #f8f8f8; }
.cad-view { display: block; width: 871px; height: 622px; background: #000; flex: none; }
.axis { font: 15px "Liberation Sans", sans-serif; fill: #c8c8c8; text-anchor: middle; }

.status { height: 28px; background: #f0f0f0; }
.g-s1 { margin-left: 2px; }
.g-s2 { margin-left: 15px; }
.g-s3 { margin-left: 12px; gap: 3px; }

.summary {
  position: relative;
  height: 24px;
  flex: none;
  display: flex;
  align-items: center;
  padding-left: 28px;
  font-size: 12.500px;
  background: #f2f2f2;
}
.sum-x { position: absolute; left: 0; top: 5px; width: 12px; height: 12px; }

.sheet { flex: 1; display: flex; background: #fff; min-height: 0; }
.sheet-grip {
  width: 12px;
  margin-right: 2px;
  flex: none;
  background: repeating-linear-gradient(#ccc 0 2px, transparent 2px 4px) 3px 0 / 2px 100% no-repeat,
    repeating-linear-gradient(#ccc 0 2px, transparent 2px 4px) 7px 0 / 2px 100% no-repeat,
    #f2f2f2;
}
.grid { border-collapse: collapse; table-layout: fixed; width: 333px; height: 96px; }
.c0 { width: 22px; }
.c1 { width: 64px; }
.c2 { width: 101px; }
.c3 { width: 73px; }
.c4 { width: 73px; }
.grid th, .grid td { border: 1px solid #c8c8c8; padding: 0 0 0 1px; height: 18px; font-weight: normal; white-space: nowrap; overflow: hidden; }
.grid td { padding-bottom: 2px; box-sizing: border-box; line-height: 16px; }
.grid th { background: linear-gradient(#fafafa, #e6e6e6); text-align: center; }
.grid .hname { background: linear-gradient(#fbdda2, #f3c362); color: #5a0a80; }
.grid em { font: 10px "Liberation Mono", monospace; font-style: normal; color: #222; vertical-align: 1px; }
.num { text-align: center; background: #f4f4f4; }
.cur .num { background: #fbd79c; color: #a04000; }
.cur .name { background: #d8e8f8; }
.total td { background: #ccfccc; }
.total .num { background: #f4f4f4; }

.notes { position: absolute; left: 0; top: 0; pointer-events: none; }
.mark { fill: none; stroke: #fb1f14; stroke-width: 3; }
.note-text {
  position: absolute;
  left: 427px;
  top: 386px;
  font-size: 21px;
  line-height: 30px;
  color: #e8251a;
  white-space: nowrap;
}
</style>
